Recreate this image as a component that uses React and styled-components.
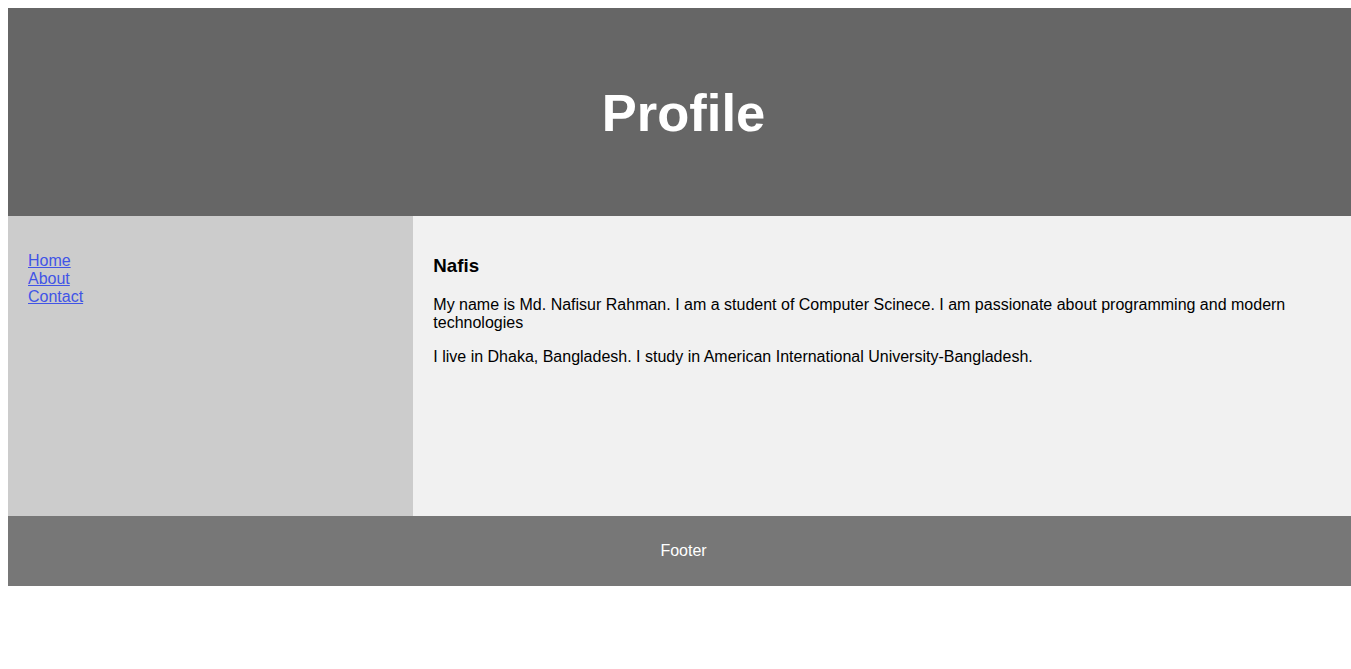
import React from 'react';
import styled, { createGlobalStyle } from 'styled-components';

const GlobalStyle = createGlobalStyle`
  * {
    box-sizing: border-box;
  }
  body {
    margin: 8px 0 8px 8px;
    font-family: "Liberation Sans", Arial, Helvetica, sans-serif;
    font-size: 16px;
    color: #000;
    background: #fff;
  }
`;

const Page = styled.div`
  width: 100%;
`;

const Header = styled.header`
  background-color: #666;
  padding: 30px;
  text-align: center;
  font-size: 35px;
  color: #fff;

  h2 {
    font-size: 1.5em;
    margin: 0.83em 0;
    line-height: normal;
    padding-left: 8px;
  }
`;

const Main = styled.section`
  display: flex;
`;

const Nav = styled.nav`
  flex: 0 0 30vw;
  height: 300px;
  padding: 20px;
  background: #ccc;

  ul {
    list-style-type: none;
    padding: 0;
    margin: 16px 0;
  }

  a {
    color: #4154e6;
  }
`;

const Article = styled.article`
  flex: 1;
  height: 300px;
  padding: 20px;
  background-color: #f1f1f1;

  h3 {
    font-size: 1.17em;
    margin: 1em 0;
  }

  p {
    margin: 16px 0;
  }
`;

const Footer = styled.footer`
  background-color: #777;
  padding: 10px 10px 10px 18px;
  text-align: center;
  color: #fff;

  p {
    margin: 16px 0;
  }
`;

const App = () => {
  return (
    <Page>
      <GlobalStyle />
      <Header>
        <h2>Profile</h2>
      </Header>
      <Main>
        <Nav>
          <ul>
            <li><a href="#">Home</a></li>
            <li><a href="#">About</a></li>
            <li><a href="#">Contact</a></li>
          </ul>
        </Nav>
        <Article>
          <h3>Nafis</h3>
          <p>
            My name is Md. Nafisur Rahman. I am a student of Computer Scinece. I am passionate about programming and modern technologies
          </p>
          <p>I live in Dhaka, Bangladesh. I study in American International University-Bangladesh.</p>
        </Article>
      </Main>
      <Footer>
        <p>Footer</p>
      </Footer>
    </Page>
  );
};

export default App;
